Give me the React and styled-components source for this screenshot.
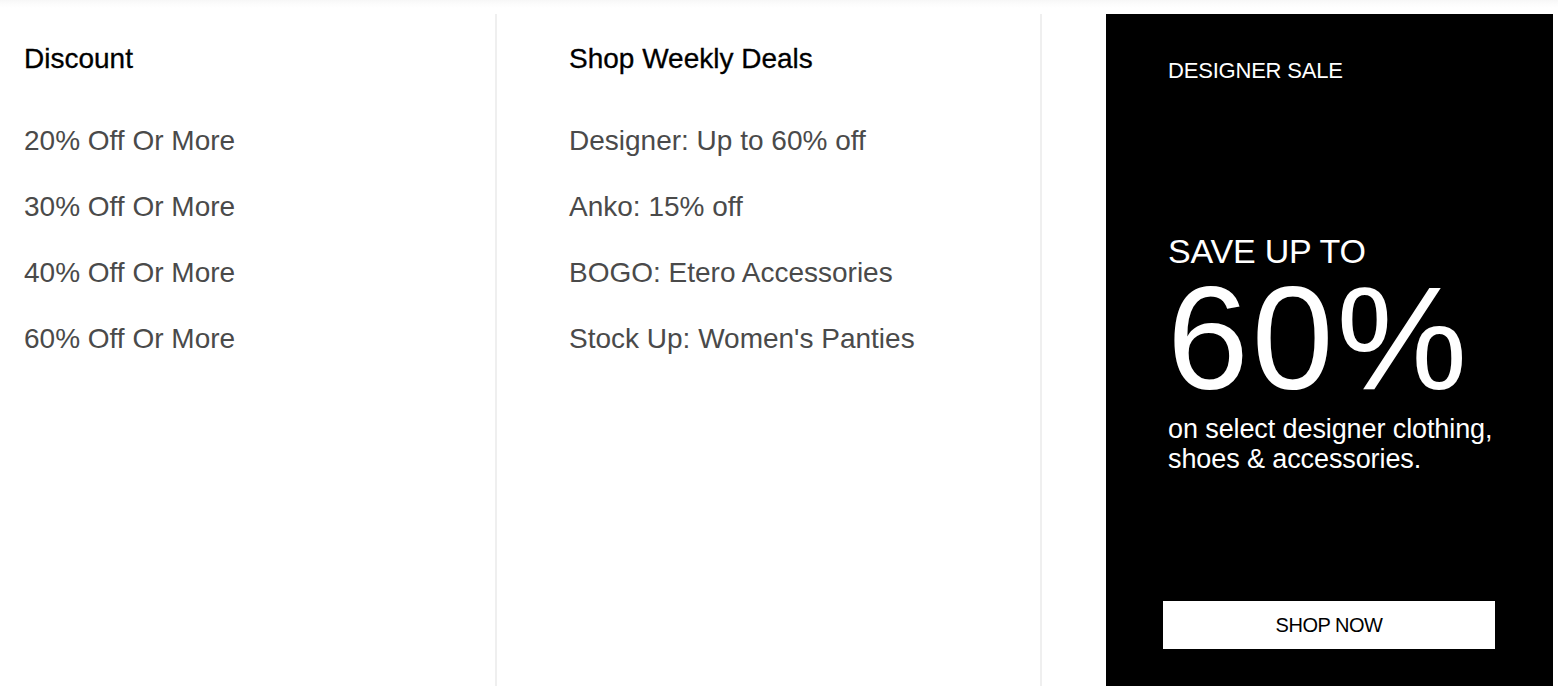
import React from "react";
import styled, { createGlobalStyle } from "styled-components";

const Global = createGlobalStyle`
  html, body { margin: 0; padding: 0; background: #fff; }
  body { font-family: "Liberation Sans", Arial, Helvetica, sans-serif; -webkit-font-smoothing: antialiased; }
`;

const Page = styled.div`
  width: 1558px;
  height: 700px;
  box-sizing: border-box;
  padding-top: 14px;
  background: linear-gradient(to bottom, #f7f7f7 0px, #fcfcfc 4px, #ffffff 8px);
  display: grid;
  grid-template-columns: 497px 497px 1fr;
  column-gap: 48px;
  align-items: start;
`;

const Column = styled.div`
  box-sizing: border-box;
  height: 672px;
  padding: 29px 0 0 24px;
  border-right: 2px solid #efefef;
  display: flex;
  flex-direction: column;
  background: #fff;
`;

const Heading = styled.h3`
  margin: 0 0 50px;
  font-size: 28px;
  line-height: 32px;
  font-weight: 400;
  color: #000;
  -webkit-text-stroke: 0.3px #000;
`;

const LinkList = styled.ul`
  list-style: none;
  margin: 0;
  padding: 0;
  display: flex;
  flex-direction: column;
  gap: 34px;
`;

const LinkItem = styled.li`
  font-size: 28px;
  line-height: 32px;
  color: #4a4a4a;
`;

const Promo = styled.div`
  margin: 0 5px 0 16px;
  box-sizing: border-box;
  height: 672px;
  background: #000;
  color: #fff;
  padding: 45px 30px 37px 62px;
  display: flex;
  flex-direction: column;
`;

const Eyebrow = styled.div`
  font-size: 22px;
  line-height: 24px;
  letter-spacing: -0.2px;
  margin-bottom: 150px;
`;

const SaveLine = styled.div`
  font-size: 34px;
  line-height: 36px;
  letter-spacing: -0.2px;
  margin-bottom: 14px;
`;

const BigNumber = styled.div`
  font-size: 147px;
  line-height: 110px;
  letter-spacing: 3px;
  margin-left: -1px;
  margin-bottom: 21px;
`;

const Description = styled.p`
  margin: 0;
  max-width: 340px;
  font-size: 27px;
  line-height: 30px;
  letter-spacing: -0.1px;
`;

const ShopButton = styled.button`
  margin-top: auto;
  margin-left: -5px;
  width: 332px;
  height: 48px;
  border: none;
  background: #fff;
  color: #000;
  font-family: inherit;
  font-size: 20px;
  letter-spacing: -0.5px;
  cursor: pointer;
`;

const discounts = ["20% Off Or More", "30% Off Or More", "40% Off Or More", "60% Off Or More"];
const deals = ["Designer: Up to 60% off", "Anko: 15% off", "BOGO: Etero Accessories", "Stock Up: Women's Panties"];

function MenuColumn({ title, items }) {
  return (
    <Column>
      <Heading>{title}</Heading>
      <LinkList>
        {items.map((t) => (
          <LinkItem key={t}>{t}</LinkItem>
        ))}
      </LinkList>
    </Column>
  );
}

export default function App() {
  return (
    <>
      <Global />
      <Page>
        <MenuColumn title="Discount" items={discounts} />
        <MenuColumn title="Shop Weekly Deals" items={deals} />
        <Promo>
          <Eyebrow>DESIGNER SALE</Eyebrow>
          <SaveLine>SAVE UP TO</SaveLine>
          <BigNumber>60%</BigNumber>
          <Description>on select designer clothing, shoes &amp; accessories.</Description>
          <ShopButton>SHOP NOW</ShopButton>
        </Promo>
      </Page>
    </>
  );
}
